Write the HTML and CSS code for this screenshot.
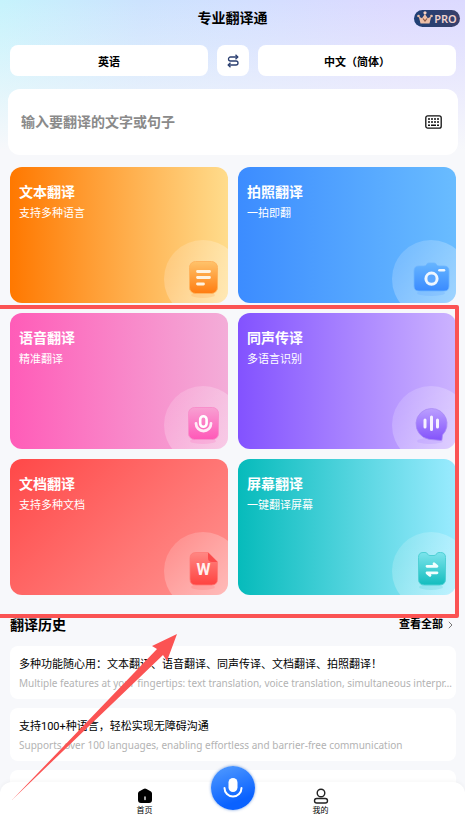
FILE: index.html
```
<!DOCTYPE html>
<html lang="zh-CN">
<head>
  <meta charset="UTF-8">
  <meta name="viewport" content="width=device-width, initial-scale=1.0">
  <title>专业翻译通</title>
  <link rel="stylesheet" href="styles.css">
</head>
<body>
  <div class="app">
    <header class="header">
      <h1>专业翻译通</h1>
      <button type="button" class="pro">
        <svg width="16" height="14" viewBox="0 0 16 14" aria-hidden="true">
          <path d="M3.5 12.5 1.8 5.5 5 7.2 7.9 3 10.8 7.2 14.2 5.5 12.5 12.5Z" fill="#eebfa6"/>
          <circle cx="1.5" cy="5" r="1.3" fill="#eebfa6"/>
          <circle cx="8" cy="1.8" r="1.6" fill="#f6d3c4"/>
          <circle cx="14.5" cy="5" r="1.3" fill="#eebfa6"/>
          <path d="M6 7.5 8 10 10 7.5" fill="none" stroke="#8a5a45" stroke-width="1.2"/>
        </svg>
        <span>PRO</span>
      </button>
    </header>

    <main class="main">
      <div class="languages">
        <button type="button" class="lang">英语</button>
        <button type="button" class="swap" aria-label="交换语言">
          <svg width="12" height="14" viewBox="0 0 12 14" fill="none" stroke="#2b3f70" stroke-width="1.3">
            <path d="M10.5 3H3.5a2 2 0 0 0 0 4H9a2 2 0 0 1 0 4H1.5"/>
            <path d="M8.5.8 10.8 3 8.5 5.2M3.5 8.8 1.2 11 3.5 13.2"/>
          </svg>
        </button>
        <button type="button" class="lang">中文（简体）</button>
      </div>

      <div class="search">
        <input type="text" placeholder="输入要翻译的文字或句子" aria-label="输入要翻译的文字或句子">
        <button type="button" aria-label="键盘">
          <svg width="17" height="14" viewBox="0 0 17 14">
            <rect x=".8" y=".8" width="15.4" height="12.4" rx="2" fill="none" stroke="#111" stroke-width="1.3"/>
            <path d="M3 4h11M3 7h11" stroke="#111" stroke-width="1.7" stroke-dasharray="2 1"/>
            <path d="M3 10.2h2M6 10.2h5M12 10.2h2" stroke="#111" stroke-width="1.6"/>
          </svg>
        </button>
      </div>

      <section class="cards">
        <a href="#text" class="card card-text">
          <h2>文本翻译</h2>
          <p>支持多种语言</p>
          <svg class="art" viewBox="0 0 78 78">
            <defs>
              <linearGradient id="glow" x2="1" y2="1"><stop stop-color="#fff" stop-opacity=".12"/><stop offset="1" stop-color="#fff" stop-opacity=".42"/></linearGradient>
              <linearGradient id="g-text" x2="0" y2="1"><stop stop-color="#ffc36b"/><stop offset="1" stop-color="#ff7c10"/></linearGradient>
            </defs>
            <circle cx="39" cy="39" r="39" fill="url(#glow)"/>
            <ellipse cx="39" cy="55" rx="12" ry="3" fill="#ff9a3c" opacity=".2"/>
            <rect x="25.5" y="21.5" width="28" height="32" rx="6" fill="url(#g-text)" stroke="#ffb45e"/>
            <path d="M33.5 31.5h12M33.5 37.5h12M33.5 44h6" stroke="#fff3e2" stroke-width="2.8" stroke-linecap="round"/>
          </svg>
        </a>
        <a href="#photo" class="card card-photo">
          <h2>拍照翻译</h2>
          <p>一拍即翻</p>
          <svg class="art" viewBox="0 0 78 78">
            <defs>
              <linearGradient id="g-photo" x2="0" y2="1"><stop stop-color="#66b5ff"/><stop offset="1" stop-color="#3a8bff"/></linearGradient>
            </defs>
            <circle cx="39" cy="39" r="39" fill="url(#glow)"/>
            <ellipse cx="39" cy="53" rx="14" ry="3" fill="#3a8bff" opacity=".15"/>
            <path d="M27 26h5q2 0 2.5-1.500T37 23h5q2 0 2.5 1.500T47 26h5q5 0 5 5v15q0 5-5 5H27q-5 0-5-5V31q0-5 5-5Z" fill="url(#g-photo)" stroke="#6db5ff" stroke-width=".8"/>
            <circle cx="39.5" cy="38.7" r="5.6" fill="#5ba6ff" stroke="#eef6ff" stroke-width="3"/>
            <path d="M47.5 30.2h4.5" stroke="#eef6ff" stroke-width="2.6" stroke-linecap="round"/>
          </svg>
        </a>
        <a href="#voice" class="card card-voice">
          <h2>语音翻译</h2>
          <p>精准翻译</p>
          <svg class="art" viewBox="0 0 78 78">
            <defs>
              <linearGradient id="g-voice" x2="0" y2="1"><stop stop-color="#f8a0d2"/><stop offset="1" stop-color="#ff58b8"/></linearGradient>
            </defs>
            <circle cx="39" cy="39" r="39" fill="url(#glow)"/>
            <ellipse cx="39" cy="55" rx="13" ry="3" fill="#ff66bd" opacity=".2"/>
            <rect x="24.5" y="21.5" width="30" height="32" rx="6" fill="url(#g-voice)" stroke="#f88fcb"/>
            <rect x="36.2" y="30.3" width="6.4" height="10.5" rx="3.2" fill="none" stroke="#fff" stroke-width="2.6"/>
            <path d="M32 37.5a7.5 7.5 0 0 0 15 0" fill="none" stroke="#ffeaf6" stroke-width="2.8" stroke-linecap="round"/>
          </svg>
        </a>
        <a href="#live" class="card card-live">
          <h2>同声传译</h2>
          <p>多语言识别</p>
          <svg class="art" viewBox="0 0 78 78">
            <defs>
              <linearGradient id="g-live" x2="0" y2="1"><stop stop-color="#bb9fff"/><stop offset="1" stop-color="#8352fb"/></linearGradient>
            </defs>
            <circle cx="39" cy="39" r="39" fill="url(#glow)"/>
            <ellipse cx="38" cy="55" rx="13" ry="3" fill="#8352fb" opacity=".12"/>
            <path d="M39.5 22.5a15.5 15.5 0 0 1 11 26.5l-.5 4.5q-.2 1-1.3.9L37 53.3a15.5 15.5 0 0 1 2.5-30.800Z" fill="url(#g-live)" stroke="#a98bf5" stroke-width=".8"/>
            <path d="M33 34v7M39.5 31v12.5M45.5 34v7" stroke="#f6f1ff" stroke-width="3" stroke-linecap="round"/>
          </svg>
        </a>
        <a href="#document" class="card card-document">
          <h2>文档翻译</h2>
          <p>支持多种文档</p>
          <svg class="art" viewBox="0 0 78 78">
            <defs>
              <linearGradient id="g-doc" x2="0" y2="1"><stop stop-color="#ff8783"/><stop offset="1" stop-color="#ff4340"/></linearGradient>
            </defs>
            <circle cx="39" cy="39" r="39" fill="url(#glow)"/>
            <ellipse cx="39" cy="55" rx="12" ry="3" fill="#ff4b4b" opacity=".15"/>
            <path d="M32 20.5H44L53.5 30V47q0 6-6 6H32q-6 0-6-6V26.5q0-6 6-6Z" fill="url(#g-doc)" stroke="#ff7a76" stroke-width=".8"/>
            <path d="M44 20.5 53.5 30H48q-4 0-4-4Z" fill="#fb4a4b"/>
            <text x="39.5" y="43" text-anchor="middle" class="art-letter">W</text>
          </svg>
        </a>
        <a href="#screen" class="card card-screen">
          <h2>屏幕翻译</h2>
          <p>一键翻译屏幕</p>
          <svg class="art" viewBox="0 0 78 78">
            <defs>
              <linearGradient id="g-screen" x2="0" y2="1"><stop stop-color="#7de4ec"/><stop offset="1" stop-color="#12bdbe"/></linearGradient>
            </defs>
            <circle cx="39" cy="39" r="39" fill="url(#glow)"/>
            <ellipse cx="39" cy="55" rx="12" ry="3" fill="#12bdbe" opacity=".15"/>
            <path d="M31 20.5h2q2 0 2.5 1.5t2.5 1.5h4q2 0 2.5-1.500T47 20.5h1.5q5 0 5 5V47q0 6-6 6h-15q-6 0-6-6V25.5q0-5 4.5-5Z" fill="url(#g-screen)" stroke="#4fd0d5"/>
            <path d="M35 34.3H45L42 31.8M45 40.8H35L38 43.3" fill="none" stroke="#f2ffff" stroke-width="2.8" stroke-linecap="round" stroke-linejoin="round"/>
          </svg>
        </a>
      </section>

      <section class="history">
        <div class="history-head">
          <h2>翻译历史</h2>
          <a href="#history">查看全部
            <svg width="5" height="8" viewBox="0 0 5 8" fill="none" stroke="#777"><path d="M.8.8 4 4 .8 7.2"/></svg>
          </a>
        </div>
        <ul>
          <li>
            <h3>多种功能随心用：文本翻译、语音翻译、同声传译、文档翻译、拍照翻译！</h3>
            <p>Multiple features at your fingertips: text translation, voice translation, simultaneous interpr…</p>
          </li>
          <li>
            <h3>支持100+种语言，轻松实现无障碍沟通</h3>
            <p>Supports over 100 languages, enabling effortless and barrier-free communication</p>
          </li>
          <li></li>
        </ul>
      </section>
    </main>

    <nav class="tabbar">
      <a href="#home">
        <svg width="16" height="16" viewBox="0 0 16 16">
          <path d="M6.5 1q1.5-1 3 0L14 3.5q1 .8 1 2V12q0 3-3 3H4q-3 0-3-3V5.5q0-1.2 1-2Z" fill="#000"/>
          <path d="M8 9v2.5" stroke="#fff" stroke-width="1.3" stroke-linecap="round"/>
        </svg>
        <span>首页</span>
      </a>
      <button type="button" class="mic" aria-label="语音">
        <svg width="22" height="22" viewBox="0 0 22 22">
          <rect x="6.5" y="1" width="9" height="14" rx="4.5" fill="#fff"/>
          <path d="M2.5 11a8.5 8.5 0 0 0 17 0" fill="none" stroke="#fff" stroke-width="2" stroke-linecap="round"/>
        </svg>
      </button>
      <a href="#me">
        <svg width="16" height="16" viewBox="0 0 16 16" fill="none" stroke="#222" stroke-width="1.4">
          <circle cx="8" cy="5" r="3.8"/>
          <rect x="1.5" y="10.5" width="13" height="4.5" rx="2.2"/>
        </svg>
        <span>我的</span>
      </a>
    </nav>

    <!-- highlight frame and pointer -->
    <div class="highlight"></div>
    <svg class="pointer" width="166" height="166" viewBox="0 0 166 166" aria-hidden="true">
      <path d="M0 166 145 15 140 12 165 0 155 27 151 21Z" fill="#fb5353"/>
    </svg>
  </div>
</body>
</html>
```
FILE: styles.css
```
:root {
  --page-bg: #f7f8fb;
  --text: #000;
  --muted: #b3b3b3;
  --mark: #fb5353;
}

* {
  box-sizing: border-box;
}

body {
  margin: 0;
  font-family: Roboto, "Noto Sans CJK SC", sans-serif;
  font-size: 11px;
  color: var(--text);
}

h1,
h2,
h3,
p,
ul {
  margin: 0;
  padding: 0;
}

a {
  color: inherit;
  text-decoration: none;
}

button {
  border: none;
  padding: 0;
  background: none;
  font-family: inherit;
  color: inherit;
  cursor: pointer;
}

svg {
  display: block;
}

.app {
  position: relative;
  display: flex;
  flex-direction: column;
  height: 100vh;
  overflow: hidden;
  background:
    linear-gradient(to bottom, rgba(247, 248, 251, 0) 0, rgba(247, 248, 251, 0.3) 50px, var(--page-bg) 150px),
    linear-gradient(to right, #c6f3fc 0%, #cce3fe 30%, #d2e0ff 50%, #dcd9ff 85%, #dcdaff 100%);
}

.header {
  display: grid;
  grid-template-columns: 1fr auto 1fr;
  align-items: center;
  height: 36px;
  flex-shrink: 0;
  padding: 0 5px;
}

.header h1 {
  grid-column: 2;
  font-size: 14px;
  font-weight: 700;
  line-height: 20px;
}

.pro {
  justify-self: end;
  display: flex;
  align-items: center;
  justify-content: center;
  gap: 1px;
  width: 46px;
  height: 17px;
  border-radius: 9px;
  background: linear-gradient(to right, #1f4076, #3a4069);
  color: #f0d3cd;
  font-family: "Noto Sans", sans-serif;
  font-size: 11px;
  font-weight: 600;
  line-height: 17px;
}

.main {
  flex: 1;
  min-height: 0;
  overflow: hidden;
  padding-top: 9px;
}

.languages {
  display: flex;
  gap: 9px;
  padding: 0 9px 0 10px;
}

.lang,
.swap {
  height: 31px;
  border-radius: 8px;
  background: #fff;
}

.lang {
  flex: 1;
  font-size: 11px;
  font-weight: 700;
}

.swap {
  display: flex;
  align-items: center;
  justify-content: center;
  width: 32px;
}

.search {
  display: flex;
  align-items: center;
  height: 66px;
  margin: 13px 7px 12px 8px;
  padding: 0 16px 0 13px;
  border-radius: 12px;
  background: #fff;
}

.search input {
  flex: 1;
  min-width: 0;
  padding: 0;
  border: none;
  outline: none;
  background: none;
  font-family: inherit;
  font-size: 14px;
  font-weight: 700;
}

.search input::placeholder {
  color: #8a8a8a;
}

.cards {
  display: grid;
  grid-template-columns: 1fr 1fr;
  gap: 10px;
  padding: 0 9px 0 10px;
}

.card {
  position: relative;
  height: 136px;
  padding: 14px 9px;
  border-radius: 12px;
  overflow: hidden;
  color: #fff;
}

.card h2 {
  font-size: 14px;
  font-weight: 700;
  line-height: 22px;
}

.card p {
  line-height: 22px;
}

.card-text {
  background: linear-gradient(to right, #ff7800, #ffdc8c);
}

.card-photo {
  background: linear-gradient(to right, #3c8cff, #69bcff);
}

.card-voice {
  background: linear-gradient(to right, #ff5cb8, #f3add8);
}

.card-live {
  background: linear-gradient(to right, #8352ff, #ccb3ff);
}

.card-document {
  background: linear-gradient(135deg, #ff4848, #ff9491);
}

.card-screen {
  background: linear-gradient(to right, #06bbbb, #9aebff);
}

.art {
  position: absolute;
  right: -14px;
  bottom: -15px;
  width: 78px;
  height: 78px;
}

.art-letter {
  fill: #fff0ef;
  font-size: 16px;
  font-weight: 700;
}

.history {
  padding: 20px 9px 0 10px;
}

.history-head {
  display: flex;
  align-items: center;
  justify-content: space-between;
  margin-bottom: 11px;
  line-height: 20px;
}

.history-head h2 {
  font-size: 14px;
  font-weight: 700;
}

.history-head a {
  display: flex;
  align-items: center;
  gap: 5px;
  padding-right: 3px;
  font-weight: 700;
}

.history ul {
  display: flex;
  flex-direction: column;
  gap: 9px;
  list-style: none;
}

.history li {
  min-height: 53px;
  padding: 10px 9px 7px;
  border-radius: 8px;
  background: #fff;
}

.history h3,
.history p {
  font-weight: 400;
  line-height: 18px;
  white-space: nowrap;
}

.history h3 {
  font-size: 11px;
}

.history p {
  color: var(--muted);
  font-family: "Noto Sans", sans-serif;
  font-size: 10px;
}

.tabbar {
  position: relative;
  display: flex;
  justify-content: center;
  flex-shrink: 0;
  height: 33px;
  margin-top: -12px;
  border-radius: 12px 12px 0 0;
  background: #fff;
  box-shadow: 0 -1px 4px rgba(0, 0, 0, 0.04);
}

.tabbar a,
.mic {
  width: 44px;
}

.tabbar a {
  display: flex;
  flex-direction: column;
  align-items: center;
  padding-top: 6px;
  margin: 0 22px;
  font-size: 8px;
  line-height: 14px;
}

.tabbar svg {
  flex-shrink: 0;
}

.mic {
  display: flex;
  align-items: center;
  justify-content: center;
  height: 44px;
  margin: -16px 22px 0;
  border-radius: 50%;
  background: linear-gradient(160deg, #4591ff 15%, #0a62ff 75%);
  box-shadow: 0 0 3px rgba(20, 90, 200, 0.6);
}

.highlight {
  position: absolute;
  top: 305px;
  left: -4px;
  right: 6px;
  height: 313px;
  border: 4px solid var(--mark);
  border-radius: 2px;
}

.pointer {
  position: absolute;
  top: 634px;
  left: 12px;
}
```
